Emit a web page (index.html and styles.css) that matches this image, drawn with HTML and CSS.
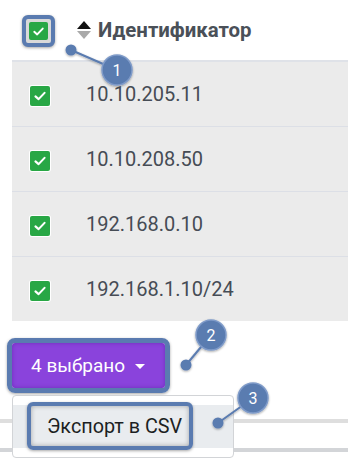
FILE: index.html
```html
<!DOCTYPE html>
<html lang="ru">
<head>
<meta charset="utf-8">
<link rel="stylesheet" href="styles.css">
</head>
<body>
<div class="page">
  <div class="table">
    <div class="thead">
      <span class="hl hl-check">
        <span class="cb cb-head"><svg viewBox="0 0 20 20" width="13" height="13"><path d="M3.5 10.5 L8 14.5 L16.5 5.5" fill="none" stroke="#fff" stroke-width="3" stroke-linecap="round" stroke-linejoin="round"/></svg></span>
      </span>
      <span class="sort"><svg viewBox="0 0 14 18" width="14" height="18"><path d="M7 0 L14 8 L0 8 Z" fill="#111"/><path d="M0 10 L14 10 L7 18 Z" fill="#a9a9a9"/></svg></span>
      <span class="th-title">Идентификатор</span>
    </div>
    <div class="tbody">
      <div class="row"><span class="cb"><svg viewBox="0 0 20 20" width="14" height="14"><path d="M3.5 10.5 L8 14.5 L16.5 5.5" fill="none" stroke="#fff" stroke-width="3" stroke-linecap="round" stroke-linejoin="round"/></svg></span><span class="ip">10.10.205.11</span></div>
      <div class="row"><span class="cb"><svg viewBox="0 0 20 20" width="14" height="14"><path d="M3.5 10.5 L8 14.5 L16.5 5.5" fill="none" stroke="#fff" stroke-width="3" stroke-linecap="round" stroke-linejoin="round"/></svg></span><span class="ip">10.10.208.50</span></div>
      <div class="row"><span class="cb"><svg viewBox="0 0 20 20" width="14" height="14"><path d="M3.5 10.5 L8 14.5 L16.5 5.5" fill="none" stroke="#fff" stroke-width="3" stroke-linecap="round" stroke-linejoin="round"/></svg></span><span class="ip">192.168.0.10</span></div>
      <div class="row"><span class="cb"><svg viewBox="0 0 20 20" width="14" height="14"><path d="M3.5 10.5 L8 14.5 L16.5 5.5" fill="none" stroke="#fff" stroke-width="3" stroke-linecap="round" stroke-linejoin="round"/></svg></span><span class="ip">192.168.1.10/24</span></div>
    </div>
  </div>

  <div class="actions">
    <div class="hl hl-btn">
      <button class="btn">4 выбрано <svg class="caret" viewBox="0 0 10 5" width="10" height="5"><path d="M0 0 L10 0 L5 5 Z" fill="#fff"/></svg></button>
    </div>
  </div>

  <div class="stripes">
    <div class="stripe stripe-a"></div>
    <div class="stripe stripe-b"></div>
  </div>

  <div class="menu">
    <div class="item">Экспорт в CSV</div>
    <span class="hl hl-item"></span>
  </div>

  <svg class="annot" viewBox="0 0 348 460" width="348" height="460">
    <defs>
      <filter id="sh" x="-50%" y="-50%" width="200%" height="200%">
        <feDropShadow dx="0" dy="1" stdDeviation="1.2" flood-color="#000" flood-opacity="0.35"/>
      </filter>
    </defs>
    <g filter="url(#sh)">
      <line x1="71" y1="50" x2="117" y2="70" stroke="#5a7bb0" stroke-width="2"/>
      <circle cx="71" cy="50" r="5.5" fill="#5a7bb0"/>
      <circle cx="117" cy="70" r="15" fill="#5a7bb0" stroke="#7f9bc9" stroke-width="1.5"/>
      <line x1="186" y1="365" x2="211" y2="335" stroke="#5a7bb0" stroke-width="2"/>
      <circle cx="186" cy="365" r="5.5" fill="#5a7bb0"/>
      <circle cx="211" cy="335" r="15" fill="#5a7bb0" stroke="#7f9bc9" stroke-width="1.5"/>
      <line x1="218" y1="423" x2="253" y2="398" stroke="#5a7bb0" stroke-width="2"/>
      <circle cx="218" cy="423" r="5.5" fill="#5a7bb0"/>
      <circle cx="253" cy="398" r="15" fill="#5a7bb0" stroke="#7f9bc9" stroke-width="1.5"/>
    </g>
    <text x="117" y="76" class="num">1</text>
    <text x="211" y="341" class="num">2</text>
    <text x="253" y="404" class="num">3</text>
  </svg>
</div>
</body>
</html>
```

FILE: styles.css
```css
* { box-sizing: border-box; }
html, body { margin: 0; padding: 0; background: #fff; }
body { font-family: Roboto, "Noto Sans", sans-serif; }

.page {
  position: relative;
  width: 348px;
  height: 460px;
  overflow: hidden;
}

.table { margin-left: 12px; }

.thead {
  height: 60px;
  display: flex;
  align-items: center;
  padding-left: 10px;
  padding-top: 2px;
}

.hl {
  border: 4px solid #5a7bb0;
  border-radius: 6px;
  box-shadow: 0 1px 3px rgba(0,0,0,0.35);
}

.hl-check {
  display: flex;
  padding: 3px;
  background: #d9d9d9;
}

.cb {
  width: 20px;
  height: 20px;
  background: #28a745;
  border-radius: 2px;
  display: flex;
  align-items: center;
  justify-content: center;
  flex: none;
  box-shadow: 0 0 0 1px #fff;
}

.cb-head { width: 19px; height: 18px; box-shadow: none; }

.sort {
  display: flex;
  margin-left: 22px;
  margin-top: -2px;
}

.th-title {
  margin-left: 7px;
  font-size: 20.4px;
  font-weight: 700;
  color: #4a5058;
  margin-top: -3px;
}

.tbody {
  background: #ebebeb;
  border-top: 2px solid #dfe2e8;
}

.row {
  height: 65px;
  display: flex;
  align-items: center;
  padding-left: 18px;
  padding-top: 4px;
  border-top: 1px solid #dcdfe6;
}
.row:first-child { border-top: none; height: 64px; }

.ip {
  margin-left: 36px;
  font-size: 20px;
  color: #464c55;
  margin-top: -4px;
}

.actions {
  margin-top: 17px;
  padding-left: 7px;
  display: flex;
}

.hl-btn {
  border-width: 5px;
  border-radius: 8px;
  display: flex;
}

.btn {
  width: 153px;
  height: 45px;
  border: none;
  border-radius: 3px;
  background: #8a43dc;
  color: #fff;
  font-family: Roboto, "Noto Sans", sans-serif;
  font-size: 19px;
  text-align: left;
  padding: 0 0 0 19px;
  display: flex;
  align-items: center;
  box-shadow: inset 0 0 4px rgba(60,0,120,0.35);
}

.caret { margin-left: 10px; margin-top: 1px; }

.stripes {
  margin-top: 26px;
}
.stripe { height: 4px; }
.stripe-a { background: #dedede; }
.stripe-b { background: #d3d5d8; margin-top: 25px; }

.menu {
  position: absolute;
  left: 12px;
  top: 395px;
  width: 222px;
  height: 63px;
  background: #fff;
  border: 1px solid #d2d4d7;
  border-radius: 4px;
  padding: 9px 0;
}

.item {
  height: 43px;
  background: #e9ecef;
  display: flex;
  align-items: center;
  padding-left: 34px;
  font-size: 19.8px;
  color: #1c1f23;
}

.hl-item {
  position: absolute;
  left: 14px;
  top: 6px;
  width: 166px;
  height: 48px;
  box-shadow: 0 1px 3px rgba(0,0,0,0.35), inset 0 0 5px rgba(0,0,0,0.3);
}

.annot {
  position: absolute;
  left: 0;
  top: 0;
  pointer-events: none;
}

.num {
  font-family: Roboto, "Noto Sans", sans-serif;
  font-size: 16px;
  fill: #fff;
  text-anchor: middle;
}
```
